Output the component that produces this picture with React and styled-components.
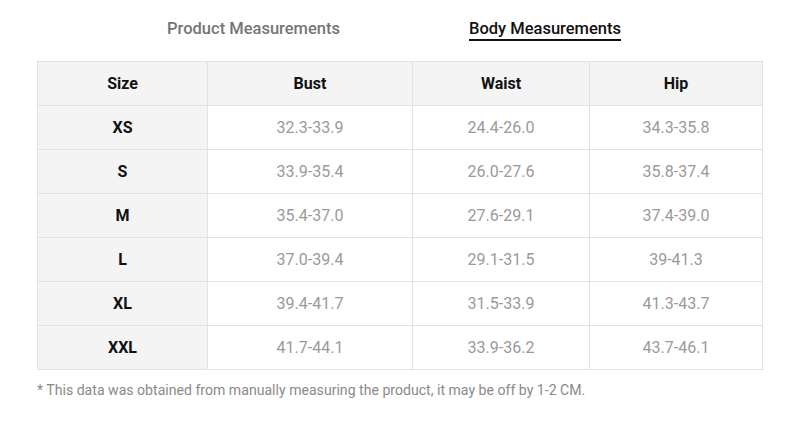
import React, { useState } from "react";
import styled, { createGlobalStyle } from "styled-components";

const GlobalStyle = createGlobalStyle`
  body {
    margin: 0;
    background: #ffffff;
    font-family: Roboto, "Liberation Sans", sans-serif;
  }
`;

const Wrapper = styled.div`
  width: 725px;
  margin: 0 0 0 37px;
  padding-top: 19px;
`;

const Tabs = styled.div`
  display: flex;
  justify-content: center;
  gap: 129px;
  padding-right: 11px;
  margin-bottom: 20px;
`;

const Tab = styled.button`
  background: none;
  border: none;
  padding: 0;
  font-family: inherit;
  font-size: 16.5px;
  font-weight: 500;
  line-height: 20px;
  cursor: pointer;
  color: ${p => (p.$active ? "#111111" : "#757575")};
  border-bottom: 2px solid ${p => (p.$active ? "#111111" : "transparent")};
`;

const Table = styled.table`
  width: 100%;
  border-collapse: collapse;
  border: 1px solid #e2e2e2;
  table-layout: fixed;
`;

const HeadCell = styled.th`
  height: 43px;
  padding: 0;
  background: #f4f4f4;
  border: 1px solid #e2e2e2;
  font-size: 16px;
  font-weight: 700;
  color: #111111;
  text-align: center;
`;

const SizeCell = styled.td`
  height: 43px;
  padding: 0;
  background: #f4f4f4;
  border: 1px solid #e2e2e2;
  font-size: 16px;
  font-weight: 700;
  color: #111111;
  text-align: center;
`;

const Cell = styled.td`
  height: 43px;
  padding: 0;
  background: #ffffff;
  border: 1px solid #e2e2e2;
  font-size: 16px;
  color: #9a9a9a;
  text-align: center;
`;

const Note = styled.p`
  margin: 12px 0 0;
  font-size: 14.1px;
  color: #8a8a8a;
`;

const rows = [
  { size: "XS", bust: "32.3-33.9", waist: "24.4-26.0", hip: "34.3-35.8" },
  { size: "S", bust: "33.9-35.4", waist: "26.0-27.6", hip: "35.8-37.4" },
  { size: "M", bust: "35.4-37.0", waist: "27.6-29.1", hip: "37.4-39.0" },
  { size: "L", bust: "37.0-39.4", waist: "29.1-31.5", hip: "39-41.3" },
  { size: "XL", bust: "39.4-41.7", waist: "31.5-33.9", hip: "41.3-43.7" },
  { size: "XXL", bust: "41.7-44.1", waist: "33.9-36.2", hip: "43.7-46.1" },
];

export default function App() {
  const [tab, setTab] = useState("body");
  return (
    <>
      <GlobalStyle />
      <Wrapper>
        <Tabs>
          <Tab $active={tab === "product"} onClick={() => setTab("product")}>
            Product Measurements
          </Tab>
          <Tab $active={tab === "body"} onClick={() => setTab("body")}>
            Body Measurements
          </Tab>
        </Tabs>
        <Table>
          <colgroup>
            <col style={{ width: 170 }} />
            <col style={{ width: 205 }} />
            <col style={{ width: 177 }} />
            <col style={{ width: 173 }} />
          </colgroup>
          <thead>
            <tr>
              <HeadCell>Size</HeadCell>
              <HeadCell>Bust</HeadCell>
              <HeadCell>Waist</HeadCell>
              <HeadCell>Hip</HeadCell>
            </tr>
          </thead>
          <tbody>
            {rows.map(r => (
              <tr key={r.size}>
                <SizeCell>{r.size}</SizeCell>
                <Cell>{r.bust}</Cell>
                <Cell>{r.waist}</Cell>
                <Cell>{r.hip}</Cell>
              </tr>
            ))}
          </tbody>
        </Table>
        <Note>* This data was obtained from manually measuring the product, it may be off by 1-2 CM.</Note>
      </Wrapper>
    </>
  );
}
